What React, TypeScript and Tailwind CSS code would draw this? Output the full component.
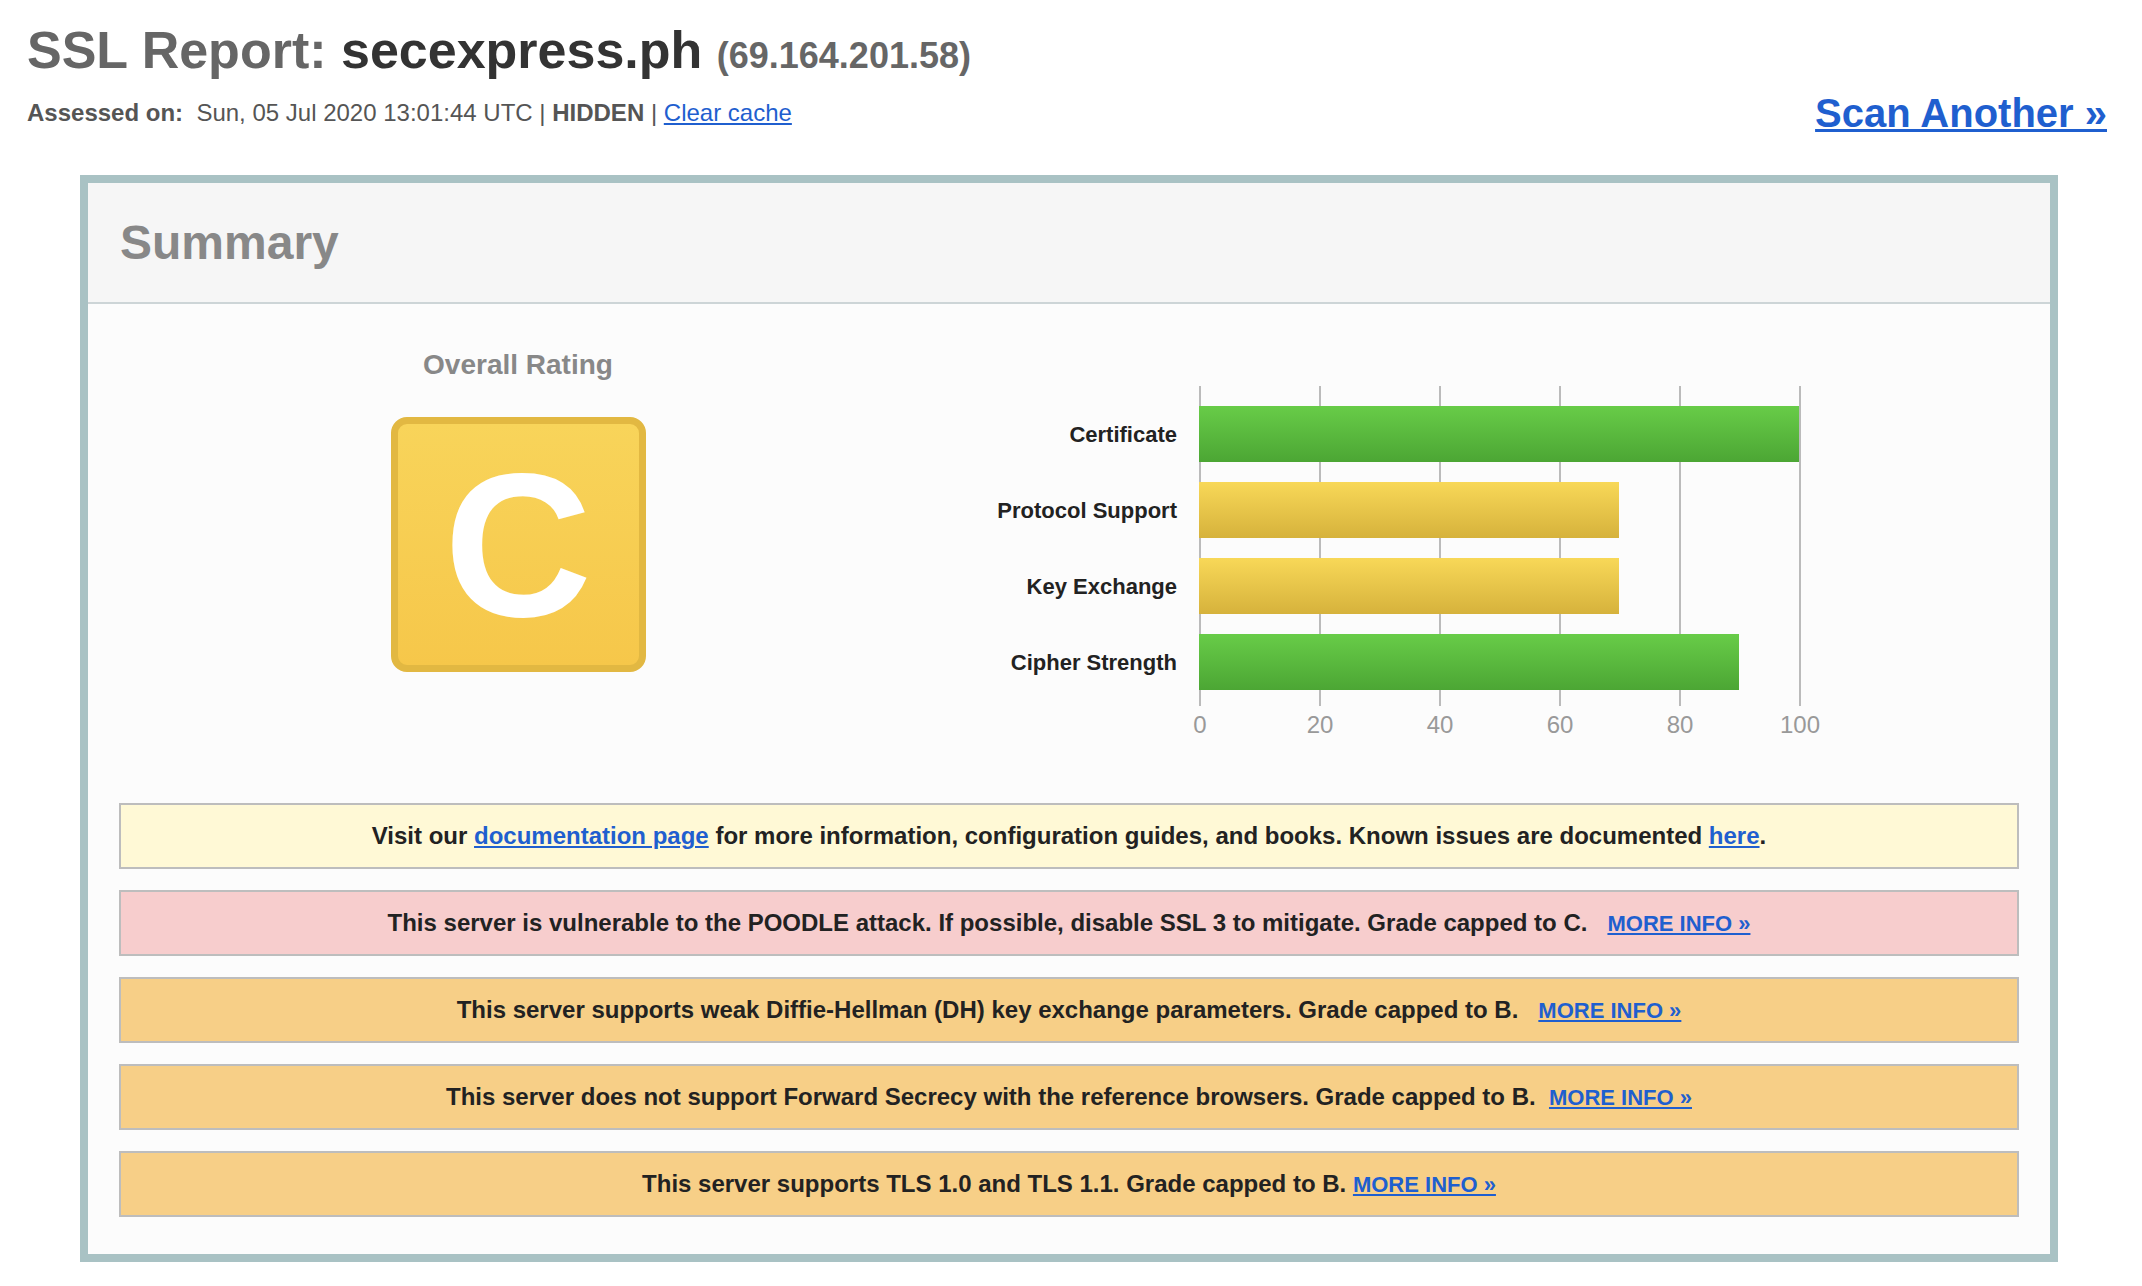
const bars = [
  { label: 'Certificate', value: 100, tone: 'green' },
  { label: 'Protocol Support', value: 70, tone: 'yellow' },
  { label: 'Key Exchange', value: 70, tone: 'yellow' },
  { label: 'Cipher Strength', value: 90, tone: 'green' },
];

const ticks = [0, 20, 40, 60, 80, 100];

const warnings = [
  { tone: 'bg-[#f7cdcd]', text: 'This server is vulnerable to the POODLE attack. If possible, disable SSL 3 to mitigate. Grade capped to C.', gap: '\u00a0\u00a0\u00a0' },
  { tone: 'bg-[#f7cf87]', text: 'This server supports weak Diffie-Hellman (DH) key exchange parameters. Grade capped to B.', gap: '\u00a0\u00a0\u00a0' },
  { tone: 'bg-[#f7cf87]', text: 'This server does not support Forward Secrecy with the reference browsers. Grade capped to B.', gap: '\u00a0\u00a0' },
  { tone: 'bg-[#f7cf87]', text: 'This server supports TLS 1.0 and TLS 1.1. Grade capped to B.', gap: '\u00a0' },
];

function RatingChart() {
  return (
    <div className="pt-[82px]">
      <div className="flex">
        <div className="flex w-[282px] flex-col gap-[20px] pr-[22px] pt-[20px]">
          {bars.map((b) => (
            <div key={b.label} className="flex h-[56px] items-center justify-end text-[22px] font-bold text-[#222]">
              {b.label}
            </div>
          ))}
        </div>
        <div className="relative h-[320px] w-[602px]">
          <svg className="absolute inset-0" width="602" height="320">
            {ticks.map((t) => (
              <line key={t} x1={t * 6 + 1} x2={t * 6 + 1} y1="0" y2="320" stroke="#bbbbbb" strokeWidth="2" />
            ))}
          </svg>
          <div className="relative flex flex-col gap-[20px] pt-[20px]">
            {bars.map((b) => (
              <div
                key={b.label}
                className={`h-[56px] ${
                  b.tone === 'green'
                    ? 'bg-[linear-gradient(#68cc48,#4ca634)]'
                    : 'bg-[linear-gradient(#f8d858,#d6b23c)]'
                }`}
                style={{ width: b.value * 6 }}
              />
            ))}
          </div>
        </div>
      </div>
      <div className="ml-[283px] mt-[5px] flex w-[600px] justify-between">
        {ticks.map((t) => (
          <div key={t} className="flex w-0 justify-center text-[24px] leading-[28px] text-[#999]">
            {t}
          </div>
        ))}
      </div>
    </div>
  );
}

export default function App() {
  return (
    <div className="min-h-[1286px] w-[2142px] bg-white font-['Liberation_Sans',Arial,sans-serif]">
      <div className="pl-[27px] pr-[35px] pt-[24px]">
        <h1 className="text-[52px] font-bold leading-[52px] text-[#666]">
          SSL Report: <span className="text-[#333]">secexpress.ph</span>{' '}
          <span className="text-[36px] text-[#666]">(69.164.201.58)</span>
        </h1>
        <div className="mt-[7px] flex items-center justify-between">
          <div className="text-[24px] text-[#555]">
            <b>Assessed on:</b>&nbsp; Sun, 05 Jul 2020 13:01:44 UTC | <b>HIDDEN</b> |{' '}
            <a href="#" className="text-[#1f5fcf] underline">
              Clear cache
            </a>
          </div>
          <a href="#" className="text-[40px] font-bold leading-[48px] text-[#1f5fcf] underline decoration-[3px]">
            Scan Another »
          </a>
        </div>
      </div>

      <div className="ml-[80px] mt-[38px] w-[1978px] border-8 border-[#a9c2c4]">
        <div className="flex h-[121px] items-center border-b-2 border-[#cdd5d7] bg-[#f6f6f6] pl-[32px]">
          <h2 className="text-[48px] font-bold text-[#888]">Summary</h2>
        </div>
        <div className="bg-[#fcfcfc] px-[31px] pb-[37px]">
          <div className="flex h-[499px]">
            <div className="flex w-[798px] flex-col items-center pt-[45px]">
              <div className="text-[28px] font-bold leading-[32px] text-[#888]">Overall Rating</div>
              <div className="mt-[36px] flex h-[255px] w-[255px] items-center justify-center rounded-[16px] border-[7px] border-[#e2b842] bg-[linear-gradient(#f8d45a,#f6c74a)]">
                <span className="text-[205px] font-bold leading-none text-white">C</span>
              </div>
            </div>
            <RatingChart />
          </div>

          <div className="flex flex-col gap-[21px]">
            <div className="flex h-[66px] items-center justify-center border-2 border-[#bdbdbd] bg-[#fff9d6] text-[24px] font-bold text-[#222]">
              <span>
                Visit our{' '}
                <a href="#" className="text-[#1f5fcf] underline">
                  documentation page
                </a>{' '}
                for more information, configuration guides, and books. Known issues are documented{' '}
                <a href="#" className="text-[#1f5fcf] underline">
                  here
                </a>
                .
              </span>
            </div>
            {warnings.map((w) => (
              <div
                key={w.text}
                className={`flex h-[66px] items-center justify-center border-2 border-[#bdbdbd] text-[24px] font-bold text-[#222] ${w.tone}`}
              >
                <span>
                  {w.text}
                  {w.gap}
                  <a href="#" className="text-[22px] text-[#1f5fcf] underline">
                    MORE INFO »
                  </a>
                </span>
              </div>
            ))}
          </div>
        </div>
      </div>
    </div>
  );
}
